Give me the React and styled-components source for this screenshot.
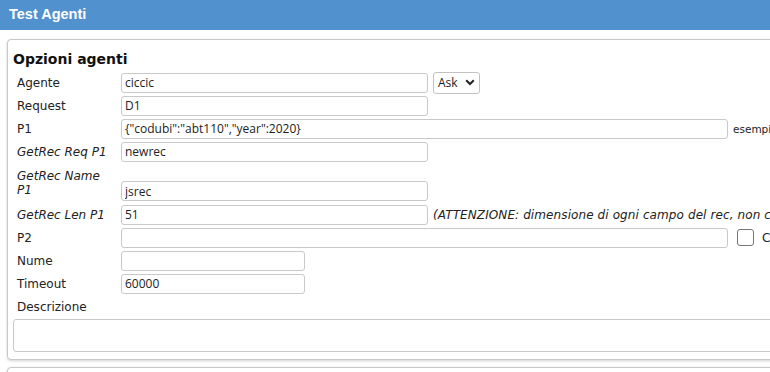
import React from "react";
import styled, { createGlobalStyle } from "styled-components";

const Global = createGlobalStyle`
  html, body { margin: 0; padding: 0; background: #fff; }
  body {
    font-family: "DejaVu Sans", Verdana, sans-serif;
    font-size: 12px;
    color: #222;
    overflow: hidden;
    width: 770px;
    height: 372px;
  }
`;

const Header = styled.div`
  height: 30px;
  background: #5191cd;
  color: #fff;
  font-family: "Liberation Sans", Arial, sans-serif;
  font-weight: bold;
  font-size: 14.5px;
  line-height: 29px;
  padding-left: 9px;
  box-sizing: border-box;
  white-space: nowrap;
`;

const Main = styled.div`
  padding: 9px 0 0 7px;
  display: flex;
  flex-direction: column;
  gap: 7px;
`;

const Panel = styled.div`
  width: 900px;
  box-sizing: border-box;
  border: 1px solid #c8c8c8;
  border-radius: 4px;
  box-shadow: 0 1px 3px rgba(0, 0, 0, 0.18);
  padding: 5px 5px 7px 5px;
  min-height: ${(p) => p.$minHeight || "0"};
  background: #fff;
`;

const Title = styled.h3`
  margin: 6px 0 4px 0;
  font-size: 14px;
  font-weight: bold;
  line-height: 16px;
  color: #111;
`;

const Form = styled.div`
  display: flex;
  flex-direction: column;
`;

const Row = styled.div`
  display: grid;
  grid-template-columns: 104px 1fr;
  min-height: ${(p) => (p.$tall ? "40px" : "23px")};
  align-items: center;
`;

const Label = styled.div`
  padding: 0 4px;
  line-height: 14px;
  font-style: ${(p) => (p.$italic ? "italic" : "normal")};
  font-size: 12px;
  color: #222;
`;

const Field = styled.div`
  display: flex;
  align-items: center;
  padding-left: 4px;
  white-space: nowrap;
  align-self: ${(p) => (p.$bottom ? "end" : "center")};
  padding-bottom: ${(p) => (p.$bottom ? "2px" : "0")};
`;

const TextInput = styled.input`
  box-sizing: border-box;
  width: ${(p) => p.$w}px;
  height: 20px;
  border: 1px solid #c9c9c9;
  border-radius: 3px;
  padding: 0 3px;
  font-family: "Open Sans", "Noto Sans", sans-serif;
  font-size: 12px;
  color: #222;
  background: #fff;
  outline: none;
  margin: 0;
`;

const SelectBox = styled.div`
  margin-left: 5px;
  width: 47px;
  height: 22px;
  box-sizing: border-box;
  border: 1px solid #c2c2c2;
  border-radius: 3px;
  font-family: "Open Sans", "Noto Sans", sans-serif;
  font-size: 12px;
  color: #222;
  display: flex;
  align-items: center;
  padding-left: 4px;
  gap: 7px;
`;

const Chevron = () => (
  <svg width="10" height="7" viewBox="0 0 10 7">
    <path d="M1.2 1.3 L5 5 L8.8 1.3" fill="none" stroke="#222" strokeWidth="2" />
  </svg>
);

const Note = styled.span`
  margin-left: ${(p) => p.$ml || 5}px;
  font-size: ${(p) => p.$size || 12}px;
  font-style: ${(p) => (p.$italic ? "italic" : "normal")};
  letter-spacing: ${(p) => (p.$italic ? "0.1px" : "0")};
  color: #222;
`;

const Check = styled.span`
  display: inline-block;
  width: 17px;
  height: 17px;
  box-sizing: border-box;
  border: 1px solid #767676;
  border-radius: 3px;
  margin-left: 9px;
  background: #fff;
`;

const TextArea = styled.div`
  height: 33px;
  box-sizing: border-box;
  border: 1px solid #c9c9c9;
  border-radius: 3px;
  margin-top: 0.5px;
`;

export default function App() {
  return (
    <>
      <Global />
      <Header>Test Agenti</Header>
      <Main>
        <Panel>
          <Title>Opzioni agenti</Title>
          <Form>
            <Row>
              <Label>Agente</Label>
              <Field>
                <TextInput $w={307} defaultValue="ciccic" />
                <SelectBox>
                  Ask <Chevron />
                </SelectBox>
              </Field>
            </Row>
            <Row>
              <Label>Request</Label>
              <Field>
                <TextInput $w={307} defaultValue="D1" />
              </Field>
            </Row>
            <Row>
              <Label>P1</Label>
              <Field>
                <TextInput $w={607} defaultValue={'{"codubi":"abt110","year":2020}'} />
                <Note $size={10.5}>esempi</Note>
              </Field>
            </Row>
            <Row>
              <Label $italic>GetRec Req P1</Label>
              <Field>
                <TextInput $w={307} defaultValue="newrec" />
              </Field>
            </Row>
            <Row $tall>
              <Label $italic>GetRec Name P1</Label>
              <Field $bottom>
                <TextInput $w={307} defaultValue="jsrec" />
              </Field>
            </Row>
            <Row>
              <Label $italic>GetRec Len P1</Label>
              <Field>
                <TextInput $w={307} defaultValue="51" />
                <Note $italic>
                  (ATTENZIONE: dimensione di ogni campo del rec, non compreso il separatore)
                </Note>
              </Field>
            </Row>
            <Row>
              <Label>P2</Label>
              <Field>
                <TextInput $w={607} defaultValue="" />
                <Check />
                <Note $ml={8}>Converti</Note>
              </Field>
            </Row>
            <Row>
              <Label>Nume</Label>
              <Field>
                <TextInput $w={184} defaultValue="" />
              </Field>
            </Row>
            <Row>
              <Label>Timeout</Label>
              <Field>
                <TextInput $w={184} defaultValue="60000" />
              </Field>
            </Row>
            <Row>
              <Label>Descrizione</Label>
            </Row>
          </Form>
          <TextArea />
        </Panel>
        <Panel $minHeight="40px" />
      </Main>
    </>
  );
}
